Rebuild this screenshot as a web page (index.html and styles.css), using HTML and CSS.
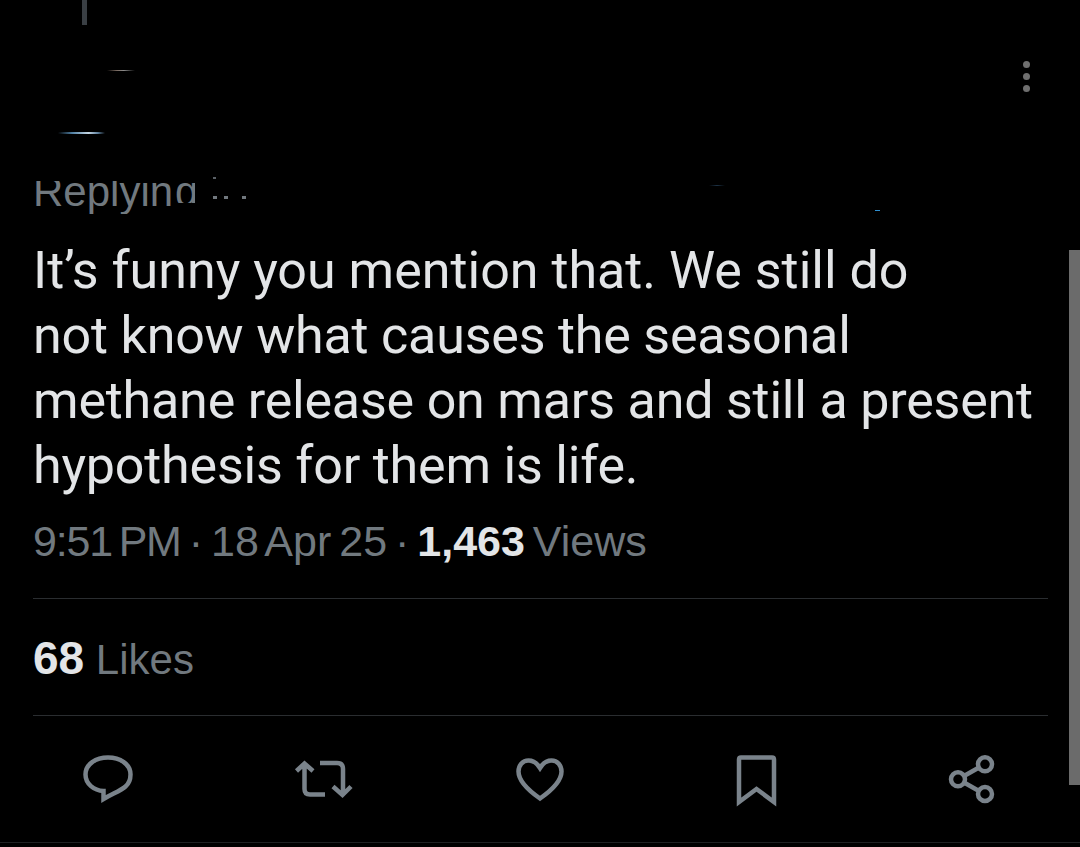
FILE: index.html
```html
<!DOCTYPE html>
<html lang="en">
<head>
<meta charset="utf-8">
<title>Post</title>
<link rel="stylesheet" href="styles.css">
</head>
<body>
<main class="screen">
  <div class="thread-tick"></div>
  <span class="speck speck-name"></span>
  <span class="speck speck-handle"></span>
  <span class="speck speck-link1"></span>
  <span class="speck speck-link2"></span>
  <span class="speck speck-dot"></span>
  <div class="more"><i></i><i></i><i></i></div>
  <div class="scrollbar"></div>

  <div class="reply-row">
    <div class="reply-clip"><span class="reply-text">Replyin</span></div><div class="reply-clip reply-clip-g"><span class="reply-text">g</span></div>
    <span class="reply-dots"><i></i><i></i><i></i></span>
  </div>

  <p class="tweet">It’s funny you mention that. We still do<br><span class="tight">not know what causes the seasonal</span><br><span class="tight">methane release on mars and still a present</span><br><span class="tight">hypothesis for them is life.</span></p>

  <div class="meta"><span class="time">9:51 PM</span> · 18 Apr 25 · <b>1,463</b> Views</div>
  <div class="likes"><b>68</b> Likes</div>

  <div class="actions">
    <svg class="icon" viewBox="0 0 60 64"><path d="M30 12.5C18 12.5 7.5 19 7.5 29.5C7.5 39 16 45.500 25.500 46V54C35 48.500 43 45.500 47.500 41.500C51 38.500 52.500 34.500 52.500 29.500C52.500 19 42 12.500 30 12.500Z"/></svg>
    <svg class="icon" viewBox="0 0 60 64"><path d="M2.500 26L10.500 18.500L19 26M10.500 19V44Q10.500 49.500 16 49.500H31M26 18H43Q49 18 49 24V49M39 41.500L48.500 50L57 41.500"/></svg>
    <svg class="icon" viewBox="0 0 60 64"><path d="M30 23C27 18 23 15.500 18.500 15.500C12.500 15.500 8.500 20.500 8.500 26.500C8.500 37 20 46.500 30 53.500C40 46.500 51.500 37 51.500 26.500C51.500 20.500 47.500 15.500 41.500 15.500C37 15.500 33 18 30 23Z"/></svg>
    <svg class="icon" viewBox="0 0 60 64"><path d="M13 57V14.500Q13 12.500 15 12.500H46Q48 12.500 48 14.500V57L30.500 44Z"/></svg>
    <svg class="icon" viewBox="0 0 60 64"><circle cx="16" cy="34.300" r="7"/><circle cx="43" cy="19.300" r="7"/><circle cx="43" cy="49" r="7"/><path d="M22 31L37 22.500M22 37.500L37 46"/></svg>
  </div>
  <div class="footer-line"></div>
</main>
</body>
</html>
```
FILE: styles.css
```css
* { box-sizing: border-box; }
html, body { margin: 0; background: #000; }
body { font-family: "Liberation Sans", Arial, sans-serif; }
.screen {
  position: relative;
  width: 1080px;
  height: 847px;
  padding: 181px 32px 0 33px;
  overflow: hidden;
  background: #000;
}
.thread-tick { position: absolute; left: 82px; top: 0; width: 5px; height: 25px; background: #3a3f44; }
.speck { position: absolute; height: 1px; }
.speck-name { left: 107px; top: 70px; width: 28px; background: linear-gradient(90deg, #000, #7a6a60 35%, #8a8a8a 60%, #000); }
.speck-handle { left: 58px; top: 132px; width: 47px; height: 2px; background: linear-gradient(90deg, #000, #4f7fa3 30%, #c4d6e4 65%, #5d7f9c 85%, #000); }
.speck-link1 { left: 709px; top: 185px; width: 16px; background: linear-gradient(90deg, #000, #1d3347, #000); }
.speck-link2 { left: 875px; top: 210px; width: 5px; background: #2f8fd0; }
.speck-dot { left: 213px; top: 177px; width: 3px; height: 2px; background: #5a6066; }
.more { position: absolute; left: 1023px; top: 61px; display: flex; flex-direction: column; gap: 5px; }
.more i { display: block; width: 7px; height: 7px; border-radius: 50%; background: #6f6f6f; }
.scrollbar { position: absolute; left: 1069px; top: 250px; width: 11px; height: 535px; background: #6b6b6b; }

.reply-row { display: flex; height: 33px; align-items: flex-start; }
.reply-clip { width: 142px; height: 33px; overflow: hidden; }
.reply-clip-g { width: 20px; height: 22px; }
.reply-text { display: block; margin-top: -13px; font-size: 42px; line-height: 48px; color: #71797f; }
.reply-dots { display: flex; gap: 7px; margin: 15px 0 0 18px; }
.reply-dots i { display: block; width: 4px; height: 3px; background: #70777d; }
.reply-dots i:last-child { margin-left: 7px; }

.tweet {
  margin: 24px 0 0;
  font-family: Roboto, sans-serif;
  font-size: 52px;
  line-height: 65px;
  color: #e3e5e7;
  white-space: nowrap;
}
.tight { letter-spacing: -0.2px; }
.meta { margin-top: 16px; font-size: 43px; line-height: 55px; word-spacing: -4px; color: #71797f; }
.time { letter-spacing: -1.2px; }
.meta b, .likes b { font-weight: 700; color: #e3e5e7; }
.likes {
  margin-top: 29px;
  padding: 33px 0 28px;
  border-top: 1px solid #2a2d30;
  border-bottom: 1px solid #2a2d30;
  font-size: 42px;
  line-height: 55px;
  color: #71797f;
}
.likes b { font-size: 46px; line-height: 1; }
.actions {
  display: grid;
  grid-template-columns: repeat(5, 216px);
  justify-items: center;
  margin: 29px -32px 0 -33px;
}
.icon { display: block; width: 60px; height: 64px; fill: none; stroke: #7a838b; stroke-width: 4.500; }
.footer-line { position: absolute; left: 0; right: 0; top: 842px; height: 1px; background: #1e2022; }
```
